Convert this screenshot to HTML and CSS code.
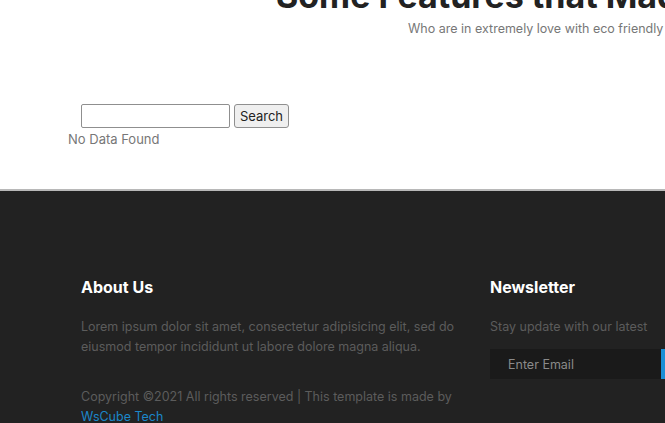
FILE: index.html
```html
<!DOCTYPE html>
<html lang="en">
  <head>
    <meta charset="UTF-8" />
    <meta name="viewport" content="width=device-width, initial-scale=1.0" />
    <title>Features</title>
    <link rel="stylesheet" href="styles.css">
  </head>
  <body>
    <section class="features">
      <h2 class="title">Some Features that Made Us Unique</h2>
      <p class="subtitle">Who are in extremely love with eco friendly system.</p>
    </section>

    <section class="search">
      <form class="search-form" action="">
        <input type="text" name="q" class="search-input"/>
        <button type="submit" class="search-btn">Search</button>
      </form>
      <p class="empty">No Data Found</p>
    </section>

    <footer class="footer">
      <div class="footer-row">
        <div class="about">
          <h4>About Us</h4>
          <p>Lorem ipsum dolor sit amet, consectetur adipisicing elit, sed do eiusmod tempor incididunt ut labore dolore magna aliqua.</p>
          <p class="copy">Copyright &copy;2021 All rights reserved | This template is made by <a href="#">WsCube Tech</a></p>
        </div>
        <div class="newsletter">
          <h4>Newsletter</h4>
          <p>Stay update with our latest</p>
          <form class="news-form" action="">
            <input type="email" placeholder="Enter Email" name="email"/>
            <button type="submit" class="news-btn"></button>
          </form>
        </div>
      </div>
    </footer>
  </body>
</html>
```

FILE: styles.css
```css
body {
  margin: 0;
  font-family: Inter, "Noto Sans", sans-serif;
  overflow: hidden;
  width: 665px;
  height: 423px;
}
.features {
  display: flow-root;
  height: 88px;
  white-space: nowrap;
}
.title {
  margin: -24px 0 0 276px;
  font-size: 34px;
  line-height: 40px;
  font-weight: 700;
  color: #222;
}
.subtitle {
  margin: 5px 0 0 408px;
  font-size: 12.5px;
  color: #777;
}
.search {
  padding: 16px 0 42px 68px;
}
.search-form {
  display: flex;
  gap: 4px;
  margin-left: 13px;
}
.search-input {
  width: 149px;
  height: 24px;
  box-sizing: border-box;
  border: 1px solid #8f8f8f;
  border-radius: 2px;
  padding: 2px 4px;
}
.search-btn {
  height: 24px;
  width: 55px;
  box-sizing: border-box;
  border: 1px solid #8f8f8f;
  border-radius: 3px;
  background-color: #efefef;
  font-family: inherit;
  font-size: 13px;
  color: #222;
  padding: 0;
}
.empty {
  margin: 3px 0 0;
  font-size: 13px;
  color: #777;
}
.footer {
  background-color: #222;
  border-top: 2px solid #b8b8b8;
  height: 240px;
  padding-top: 86px;
  box-sizing: border-box;
}
.footer-row {
  display: flex;
  padding-left: 81px;
  gap: 30px;
  white-space: nowrap;
}
.about {
  width: 385px;
  margin-right: -6px;
  flex-shrink: 0;
  white-space: normal;
}
.newsletter {
  flex-shrink: 0;
}
.footer h4 {
  margin: 0;
  font-size: 16px;
  line-height: 20px;
  color: white;
}
.footer p {
  margin: 20px 0 0;
  font-size: 12.5px;
  line-height: 20px;
  color: #5c5c5c;
}
.about .copy {
  margin-top: 30px;
}
.copy a {
  color: #1b87c9;
  text-decoration: none;
}
.news-form {
  display: flex;
  margin-top: 12px;
}
.news-form input {
  width: 171px;
  height: 30px;
  box-sizing: border-box;
  border: none;
  background-color: #1a1a1a;
  padding: 0 18px;
  font-family: inherit;
  font-size: 12.5px;
  color: #999;
}
.news-form input::placeholder {
  color: #8a8a8a;
}
.news-btn {
  width: 40px;
  height: 30px;
  border: none;
  background-color: #1b8fd6;
}
```
